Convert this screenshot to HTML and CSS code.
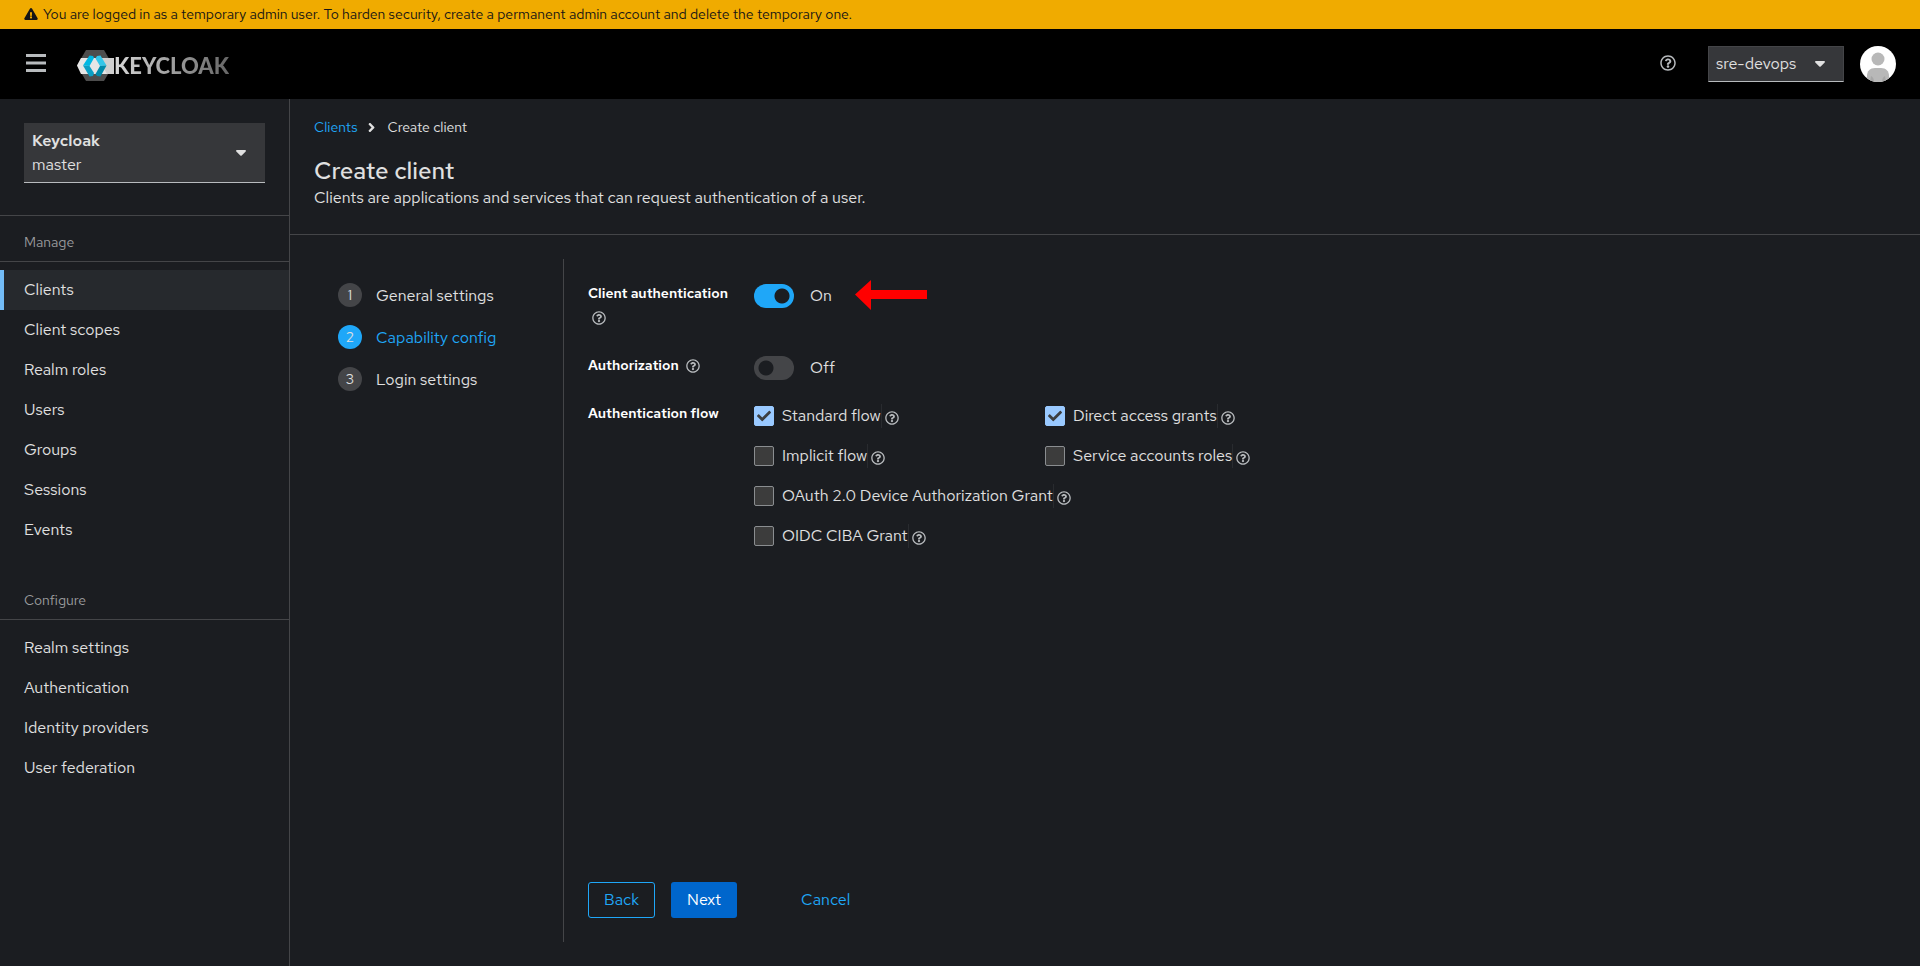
FILE: index.html
```html
<!DOCTYPE html>
<html lang="en">
<head>
    <meta charset="UTF-8">
    <title>Create client</title>
    <link rel="stylesheet" href="styles.css">
</head>
<body>
    <!-- shared icons -->
    <svg class="sprite" aria-hidden="true">
        <symbol id="icon-help" viewBox="0 0 512 512">
            <path d="M256 8C119.043 8 8 119.083 8 256c0 136.997 111.043 248 248 248s248-111.003 248-248C504 119.083 392.957 8 256 8zm0 448c-110.532 0-200-89.431-200-200 0-110.495 89.472-200 200-200 110.491 0 200 89.471 200 200 0 110.53-89.431 200-200 200zm107.244-255.2c0 67.052-72.421 68.084-72.421 92.863V300c0 6.627-5.373 12-12 12h-45.647c-6.627 0-12-5.373-12-12v-8.659c0-35.745 27.1-50.034 47.579-61.516 17.561-9.845 28.324-16.541 28.324-29.579 0-17.246-21.999-28.693-39.784-28.693-23.189 0-33.894 10.977-48.942 29.969-4.057 5.12-11.46 6.071-16.666 2.124l-27.824-21.098c-5.107-3.872-6.251-11.066-2.644-16.363C184.846 131.491 214.94 112 261.794 112c49.071 0 101.45 38.304 101.45 88.8zM298 368c0 23.159-18.841 42-42 42s-42-18.841-42-42 18.841-42 42-42 42 18.841 42 42z"/>
        </symbol>
        <symbol id="icon-caret" viewBox="0 0 10 6">
            <path d="M1 0h8c.9 0 1.300.9.700 1.500L5.700 5.500c-.4.4-1 .4-1.400 0L.3 1.500C-.3.9.1 0 1 0z"/>
        </symbol>
    </svg>

    <div class="banner">
        <svg class="banner-icon" viewBox="0 0 576 512" aria-hidden="true"><path d="M569.517 440.013C587.975 472.007 564.806 512 527.94 512H48.054c-36.937 0-59.999-40.055-41.577-71.987L246.423 23.985c18.467-32.009 64.72-31.951 83.154 0l239.94 416.028zM288 354c-25.405 0-46 20.595-46 46s20.595 46 46 46 46-20.595 46-46-20.595-46-46-46zm-43.673-165.346l7.418 136c.347 6.364 5.609 11.346 11.982 11.346h48.546c6.373 0 11.635-4.982 11.982-11.346l7.418-136c.375-6.874-5.098-12.654-11.982-12.654h-63.383c-6.884 0-12.356 5.78-11.981 12.654z"/></svg>
        <span>You are logged in as a temporary admin user. To harden security, create a permanent admin account and delete the temporary one.</span>
    </div>

    <header class="masthead">
        <button class="menu-toggle" type="button" aria-label="Global navigation">
            <svg viewBox="0 0 22 20" aria-hidden="true"><path d="M1 1h20v3H1zM1 8.500h20v3H1zM1 16h20v3H1z"/></svg>
        </button>
        <a class="brand" href="#" aria-label="Keycloak">
            <svg class="brand-mark" viewBox="77 50 37 31" aria-hidden="true">
                <path fill="#4d4d4d" d="M86 50h18l9 15.500L104 81H86l-9-15.500z"/>
                <path fill="#e6e6e6" d="M81 58h33v16H81l-4-8.500z"/>
                <path fill="#d0d0d0" d="M98 58h16v16h-7z"/>
                <path fill="#00b8e3" d="M89.500 55.500l3.500.5 1 2-4.500 8-6.500-.5z"/>
                <path fill="#0b9fc4" d="M83 65.500l6.500.5 4.500 7-1 3-3.500.5z"/>
                <path fill="#33c6e9" d="M97 56l3.500-.5 6 10-6.500.5-4.500-7.500z"/>
                <path fill="#008aaa" d="M100 66l6.500-.5-6 11-3.500-.5-1.500-2z"/>
            </svg>
            <span class="brand-name">KEYCLOAK</span>
        </a>
        <div class="tools">
            <button class="help header-help" type="button" aria-label="Help"><svg aria-hidden="true"><use href="#icon-help"/></svg></button>
            <button class="user-menu" type="button" aria-haspopup="menu">
                <span>sre-devops</span>
                <svg class="caret" aria-hidden="true"><use href="#icon-caret"/></svg>
            </button>
            <svg class="avatar" viewBox="0 0 36 36" role="img" aria-label="Avatar">
                <clipPath id="round"><circle cx="18" cy="18" r="18"/></clipPath>
                <g clip-path="url(#round)">
                    <path fill="#fff" d="M0 0h36v36H0z"/>
                    <circle cx="18" cy="13" r="6.500" fill="#b8b8b8"/>
                    <path fill="#b8b8b8" d="M7 36v-6c0-5 3-8 8-8h6c5 0 8 3 8 8v6z"/>
                    <path fill="#a6a6a6" d="M11 30c2 1 3 3 3 6h-4zM25 30c-2 1-3 3-3 6h4z"/>
                </g>
            </svg>
        </div>
    </header>

    <div class="page">
        <aside class="sidebar">
            <div class="realm">
                <button class="realm-select" type="button" aria-haspopup="listbox">
                    <span class="realm-text"><strong>Keycloak</strong><span>master</span></span>
                    <svg class="caret" aria-hidden="true"><use href="#icon-caret"/></svg>
                </button>
            </div>
            <nav class="nav-section" aria-labelledby="nav-manage">
                <h2 id="nav-manage">Manage</h2>
                <a class="current" href="#" aria-current="page">Clients</a>
                <a href="#">Client scopes</a>
                <a href="#">Realm roles</a>
                <a href="#">Users</a>
                <a href="#">Groups</a>
                <a href="#">Sessions</a>
                <a href="#">Events</a>
            </nav>
            <nav class="nav-section" aria-labelledby="nav-configure">
                <h2 id="nav-configure">Configure</h2>
                <a href="#">Realm settings</a>
                <a href="#">Authentication</a>
                <a href="#">Identity providers</a>
                <a href="#">User federation</a>
            </nav>
        </aside>

        <main class="main">
            <div class="page-head">
                <nav class="breadcrumb" aria-label="Breadcrumb">
                    <a href="#">Clients</a>
                    <svg viewBox="32 64 224 384" aria-hidden="true"><path d="M224.300 273l-136 136c-9.400 9.400-24.600 9.400-33.900 0l-22.600-22.600c-9.400-9.400-9.400-24.600 0-33.900l96.400-96.400-96.400-96.400c-9.400-9.400-9.400-24.600 0-33.900L54.300 103c9.400-9.400 24.600-9.400 33.900 0l136 136c9.500 9.400 9.500 24.600.1 34z"/></svg>
                    <span>Create client</span>
                </nav>
                <h1>Create client</h1>
                <p>Clients are applications and services that can request authentication of a user.</p>
            </div>

            <div class="wizard">
                <ol class="steps">
                    <li><span class="num">1</span><a href="#">General settings</a></li>
                    <li class="active"><span class="num">2</span><a href="#" aria-current="step">Capability config</a></li>
                    <li><span class="num">3</span><a href="#">Login settings</a></li>
                </ol>

                <form class="wizard-form">
                    <div class="fields">
                        <div class="field">
                            <div class="field-label">
                                <label for="client-auth">Client authentication</label>
                                <button class="help" type="button" aria-label="Help for client authentication"><svg aria-hidden="true"><use href="#icon-help"/></svg></button>
                            </div>
                            <div class="switch">
                                <input type="checkbox" role="switch" id="client-auth" checked>
                                <label for="client-auth">On</label>
                                <svg class="arrow" viewBox="0 0 72 32" aria-hidden="true"><path d="M0 14.500L16 0v10h56v9H16v11z"/></svg>
                            </div>
                        </div>
                        <div class="field">
                            <div class="field-label">
                                <label for="authorization">Authorization</label>
                                <button class="help" type="button" aria-label="Help for authorization"><svg aria-hidden="true"><use href="#icon-help"/></svg></button>
                            </div>
                            <div class="switch">
                                <input type="checkbox" role="switch" id="authorization">
                                <label for="authorization">Off</label>
                            </div>
                        </div>
                        <div class="field" role="group" aria-labelledby="flow-label">
                            <div class="field-label"><span id="flow-label">Authentication flow</span></div>
                            <div class="checks">
                                <div class="check">
                                    <input type="checkbox" id="standard" checked><label for="standard">Standard flow</label>
                                    <button class="help" type="button" aria-label="Help for standard flow"><svg aria-hidden="true"><use href="#icon-help"/></svg></button>
                                </div>
                                <div class="check">
                                    <input type="checkbox" id="direct" checked><label for="direct">Direct access grants</label>
                                    <button class="help" type="button" aria-label="Help for direct access grants"><svg aria-hidden="true"><use href="#icon-help"/></svg></button>
                                </div>
                                <div class="check">
                                    <input type="checkbox" id="implicit"><label for="implicit">Implicit flow</label>
                                    <button class="help" type="button" aria-label="Help for implicit flow"><svg aria-hidden="true"><use href="#icon-help"/></svg></button>
                                </div>
                                <div class="check">
                                    <input type="checkbox" id="service"><label for="service">Service accounts roles</label>
                                    <button class="help" type="button" aria-label="Help for service accounts roles"><svg aria-hidden="true"><use href="#icon-help"/></svg></button>
                                </div>
                                <div class="check wide">
                                    <input type="checkbox" id="device"><label for="device">OAuth 2.0 Device Authorization Grant</label>
                                    <button class="help" type="button" aria-label="Help for device authorization grant"><svg aria-hidden="true"><use href="#icon-help"/></svg></button>
                                </div>
                                <div class="check wide">
                                    <input type="checkbox" id="ciba"><label for="ciba">OIDC CIBA Grant</label>
                                    <button class="help" type="button" aria-label="Help for CIBA grant"><svg aria-hidden="true"><use href="#icon-help"/></svg></button>
                                </div>
                            </div>
                        </div>
                    </div>
                    <div class="actions">
                        <button class="btn secondary" type="button">Back</button>
                        <button class="btn primary" type="submit">Next</button>
                        <button class="btn link" type="button">Cancel</button>
                    </div>
                </form>
            </div>
        </main>
    </div>
</body>
</html>
```
FILE: styles.css
```css
:root {
    --bg: #1b1d21;
    --line: #444548;
    --text: #e0e0e0;
    --blue: #1fa7f8;
}

* {
    box-sizing: border-box;
}

body {
    margin: 0;
    min-height: 100vh;
    display: flex;
    flex-direction: column;
    background: var(--bg);
    color: var(--text);
    font: 16px/24px 'Red Hat Text', Lato, sans-serif;
}

a {
    color: inherit;
    text-decoration: none;
}

button {
    font: inherit;
    color: inherit;
    background: none;
    border: 0;
    padding: 0;
    cursor: pointer;
}

svg {
    display: block;
    fill: currentColor;
}

.sprite {
    display: none;
}

/* Top bars */
.banner {
    display: flex;
    align-items: center;
    gap: 5px;
    height: 29px;
    padding: 0 24px 1px;
    background: #f0ab00;
    color: #151515;
    font-size: 14px;
}

.banner-icon {
    width: 14px;
    height: 12px;
}

.masthead {
    display: flex;
    align-items: center;
    height: 70px;
    padding: 0 24px;
    background: #000;
}

.menu-toggle {
    padding: 0 0 2px 1px;
}

.menu-toggle svg {
    width: 22px;
    height: 20px;
    color: #b8bbbe;
}

.brand {
    display: flex;
    align-items: center;
    margin-left: 30px;
    padding-top: 3px;
}

.brand-mark {
    width: 37px;
    height: 31px;
}

.brand-name {
    font-family: Lato, sans-serif;
    font-weight: 900;
    font-size: 22px;
    background: linear-gradient(90deg, #d8d8d8, #666);
    background-clip: text;
    color: transparent;
}

.tools {
    display: flex;
    align-items: center;
    margin-left: auto;
}

.help svg {
    width: 14px;
    height: 14px;
    color: #b8bbbe;
}

.header-help {
    margin-right: 32px;
    padding-bottom: 2px;
}

.header-help svg {
    width: 16px;
    height: 16px;
}

.user-menu {
    display: flex;
    align-items: center;
    justify-content: space-between;
    width: 136px;
    height: 36px;
    padding: 0 18px 0 7px;
    background: #36373a;
    border: 1px solid var(--line);
    border-bottom-color: #b8bbbe;
}

.caret {
    width: 10px;
    height: 6px;
}

.avatar {
    width: 36px;
    height: 36px;
    margin-left: 16px;
}

/* Sidebar */
.page {
    flex: 1;
    display: flex;
}

.sidebar {
    width: 290px;
    border-right: 1px solid var(--line);
}

.realm {
    padding: 24px 24px 32px;
    border-bottom: 1px solid var(--line);
}

.realm-select {
    display: flex;
    align-items: center;
    justify-content: space-between;
    width: 100%;
    height: 60px;
    padding: 0 19px 0 8px;
    background: #36373a;
    border-bottom: 1px solid #b8bbbe;
    text-align: left;
}

.realm-text {
    display: grid;
}

.realm-text strong {
    font-weight: 600;
}

.nav-section {
    margin-bottom: 24px;
}

.nav-section h2 {
    margin: 0 0 8px;
    padding: 16px 24px 8px;
    border-bottom: 1px solid var(--line);
    color: #9a9b9d;
    font-size: 14px;
    font-weight: 400;
    line-height: 21px;
}

.nav-section a {
    display: block;
    padding: 8px 24px;
}

.nav-section .current {
    background: #26292d;
    box-shadow: inset 4px 0 #73bcf7;
}

/* Content */
.main {
    flex: 1;
    display: flex;
    flex-direction: column;
}

.page-head {
    padding: 16px 24px 24px;
    border-bottom: 1px solid var(--line);
}

.breadcrumb {
    display: flex;
    align-items: center;
    gap: 11px;
    font-size: 14px;
}

.breadcrumb svg {
    width: 8px;
    height: 11px;
}

.breadcrumb a {
    color: var(--blue);
}

.page-head h1 {
    margin: 16px 0 0;
    font-size: 24px;
    font-weight: 500;
    line-height: 31px;
}

.page-head p {
    margin: 0;
}

.wizard {
    flex: 1;
    display: flex;
    padding: 24px;
}

.steps {
    width: 250px;
    margin: 0;
    padding: 24px;
    border-right: 1px solid var(--line);
    list-style: none;
}

.steps li {
    display: flex;
    align-items: flex-start;
    gap: 14px;
    margin-bottom: 16px;
    line-height: 26px;
}

.num {
    width: 24px;
    border-radius: 50%;
    background: #444548;
    font-size: 14px;
    line-height: 24px;
    text-align: center;
}

.active {
    color: var(--blue);
}

.active .num {
    background: var(--blue);
    color: var(--text);
}

.wizard-form {
    flex: 1;
    display: flex;
    flex-direction: column;
    padding: 25px 24px 24px;
}

.fields {
    flex: 1;
    display: flex;
    flex-direction: column;
    gap: 24px;
}

.field {
    display: grid;
    grid-template-columns: 150px 1fr;
    gap: 16px;
}

.field-label {
    margin: -3px 0 3px;
    font-size: 14px;
    font-weight: 600;
    color: #fff;
}

.field-label .help {
    padding: 0 4px;
    vertical-align: middle;
}

.switch {
    display: flex;
    align-items: center;
    height: 24px;
    gap: 16px;
}

.switch input {
    appearance: none;
    width: 40px;
    height: 24px;
    margin: 0;
    border-radius: 12px;
    background: radial-gradient(circle at 12px 12px, var(--bg) 7px, #444548 8px);
}

.switch input:checked {
    background: radial-gradient(circle at 28px 12px, var(--bg) 7px, var(--blue) 8px);
}

.arrow {
    width: 72px;
    height: 32px;
    margin-left: 7px;
    color: #f00;
}

.checks {
    display: grid;
    grid-template-columns: 275px 1fr;
    gap: 16px;
    width: 100%;
}

.check {
    display: flex;
    align-items: center;
    white-space: nowrap;
}

.check input {
    appearance: none;
    width: 20px;
    height: 20px;
    margin: 0 8px 0 0;
    border: 1px solid #8a8d90;
    border-radius: 2px;
    background: #3c3c3c;
}

.check input:checked {
    border-color: #99c9ff;
    background: #99c9ff url("data:image/svg+xml,%3Csvg xmlns='http://www.w3.org/2000/svg' viewBox='0 0 512 512'%3E%3Cpath fill='%233c3f42' d='M173.898 439.404l-166.4-166.4c-9.997-9.997-9.997-26.206 0-36.204l36.203-36.204c9.997-9.998 26.207-9.998 36.204 0L192 312.69 432.095 72.596c9.997-9.997 26.207-9.997 36.204 0l36.203 36.204c9.997 9.997 9.997 26.206 0 36.204l-294.4 294.401c-9.998 9.997-26.207 9.997-36.204-.001z'/%3E%3C/svg%3E") center / 14px no-repeat;
}

.check label {
    box-shadow: 1px 0 #292b2f;
}

.check .help {
    padding: 4px 4px 0;
}

.wide {
    grid-column: 1 / -1;
}

.actions {
    display: flex;
    gap: 16px;
}

.btn {
    height: 36px;
    padding: 0 16px;
    border-radius: 3px;
}

.secondary {
    padding: 0 15px;
    border: 1px solid var(--blue);
    color: var(--blue);
}

.primary {
    background: #06c;
    color: #fff;
}

.link {
    margin-left: 32px;
    color: var(--blue);
}
```
